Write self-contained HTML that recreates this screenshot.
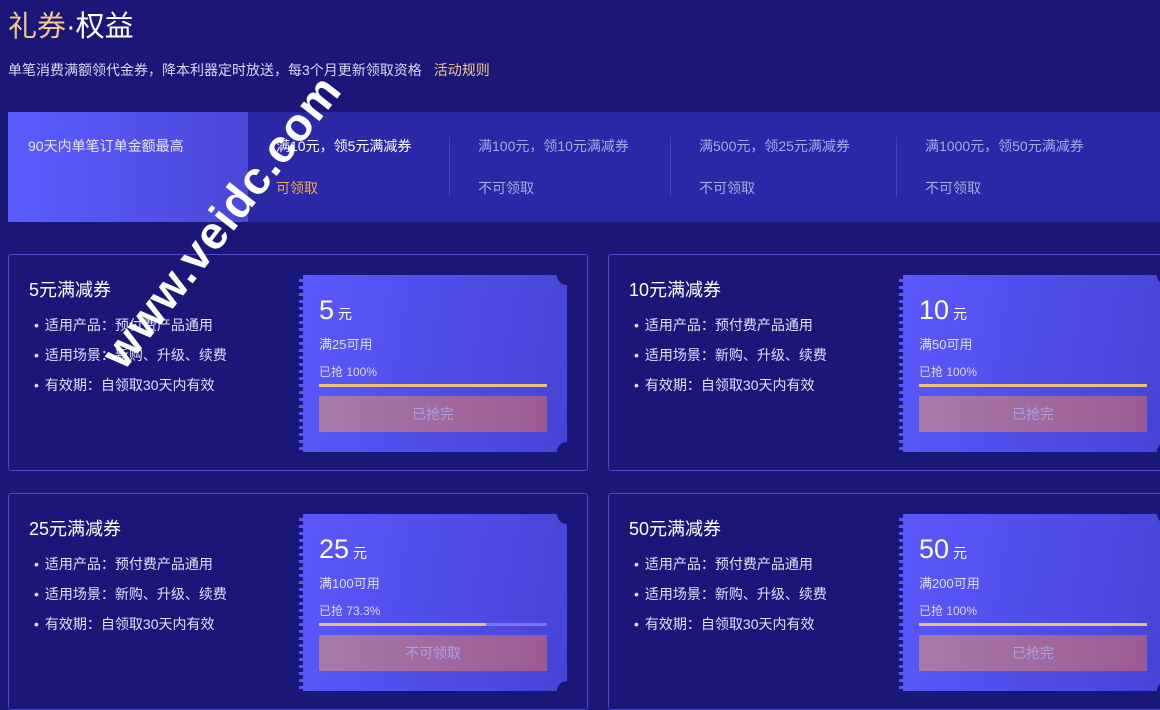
<!DOCTYPE html>
<html><head><meta charset="utf-8"><style>
*{margin:0;padding:0;box-sizing:border-box}
body{width:1160px;height:706px;overflow:hidden;background:#1a1778;font-family:"Liberation Sans","Noto Sans CJK SC",sans-serif;color:#fff;position:relative}
.t{position:absolute;left:8px;top:9px;font-size:29px;line-height:36px}
.t span{color:#f5c88a}
.sub{position:absolute;left:8px;top:60px;font-size:14px;color:#d8d8f5}
.sub b{font-weight:normal;color:#f5c88a;margin-left:12px}
.band{position:absolute;left:8px;top:112px;width:1152px;height:110px;background:#2a28a6}
.band .l{position:absolute;left:0;top:0;width:240px;height:110px;background:linear-gradient(90deg,#5a5cff,#4a48d8);font-size:14px;padding:24px 0 0 20px;color:#e8e8ff}
.step{position:absolute;top:24px;font-size:14px;color:#a9a9e0}
.step .s{margin-top:22px}
.sep{position:absolute;top:25px;width:1px;height:60px;background:#4543b8}
.card{position:absolute;width:580px;height:217px;border:1px solid #4a49c8;border-radius:3px}
.card h3{position:absolute;left:20px;top:21px;font-size:18px;font-weight:normal}
.card ul{position:absolute;left:25px;top:55px;list-style:none;font-size:14px;line-height:30px;color:#e0e0f8}
.card li:before{content:"•";margin-right:6px}
.tk{position:absolute;left:290px;top:20px;width:268px;height:177px;background:linear-gradient(100deg,#5a58fb,#4644d6);overflow:hidden}
.tk:before{content:"";position:absolute;left:0;top:0;width:4px;height:100%;background:repeating-linear-gradient(180deg,#1a1778 0 4px,transparent 4px 7px)}
.c1,.c2{position:absolute;right:-10px;width:20px;height:20px;border-radius:50%;background:#1a1778}
.c1{top:-10px}.c2{bottom:-10px}
.amt{position:absolute;left:20px;top:20px;font-size:27px}
.amt small{font-size:14px;margin-left:4px}
.cond{position:absolute;left:20px;top:59px;font-size:13px;color:#e0e0ff}
.pct{position:absolute;left:20px;top:88px;font-size:12px;color:#dcdcff}
.bar{position:absolute;left:20px;top:109px;width:228px;height:3px;background:#7a78e8}
.bar i{display:block;height:3px;background:#eec07a}
.btn{position:absolute;left:20px;top:121px;width:228px;height:36px;background:linear-gradient(90deg,#a87aa8,#9c5a94);text-align:center;line-height:36px;font-size:14px;color:#a9a0e6}
.wm{position:absolute;font-size:46px;font-weight:bold;color:#fff;transform:rotate(-52deg);transform-origin:left top;white-space:nowrap;letter-spacing:1px}
</style></head><body>
<div class="t"><span>礼券</span>·权益</div>
<div class="sub">单笔消费满额领代金券，降本利器定时放送，每3个月更新领取资格<b>活动规则</b></div>
<div class="band">
<div class="l">90天内单笔订单金额最高</div>
<div class="step" style="left:268px;color:#fff">满10元，领5元满减券<div class="s" style="color:#f5a94a">可领取</div></div>
<div class="sep" style="left:441px"></div>
<div class="step" style="left:470px">满100元，领10元满减券<div class="s">不可领取</div></div>
<div class="sep" style="left:662px"></div>
<div class="step" style="left:691px">满500元，领25元满减券<div class="s">不可领取</div></div>
<div class="sep" style="left:888px"></div>
<div class="step" style="left:917px">满1000元，领50元满减券<div class="s">不可领取</div></div>
</div>

<div class="card" style="left:8px;top:254px"><h3>5元满减券</h3><ul><li>适用产品：预付费产品通用</li><li>适用场景：新购、升级、续费</li><li>有效期：自领取30天内有效</li></ul>
<div class="tk"><div class="c1"></div><div class="c2"></div><div class="amt">5<small>元</small></div><div class="cond">满25可用</div><div class="pct">已抢 100%</div><div class="bar"><i style="width:100%"></i></div><div class="btn">已抢完</div></div></div>

<div class="card" style="left:608px;top:254px"><h3>10元满减券</h3><ul><li>适用产品：预付费产品通用</li><li>适用场景：新购、升级、续费</li><li>有效期：自领取30天内有效</li></ul>
<div class="tk"><div class="c1"></div><div class="c2"></div><div class="amt">10<small>元</small></div><div class="cond">满50可用</div><div class="pct">已抢 100%</div><div class="bar"><i style="width:100%"></i></div><div class="btn">已抢完</div></div></div>

<div class="card" style="left:8px;top:493px"><h3>25元满减券</h3><ul><li>适用产品：预付费产品通用</li><li>适用场景：新购、升级、续费</li><li>有效期：自领取30天内有效</li></ul>
<div class="tk"><div class="c1"></div><div class="c2"></div><div class="amt">25<small>元</small></div><div class="cond">满100可用</div><div class="pct">已抢 73.3%</div><div class="bar"><i style="width:73.3%"></i></div><div class="btn">不可领取</div></div></div>

<div class="card" style="left:608px;top:493px"><h3>50元满减券</h3><ul><li>适用产品：预付费产品通用</li><li>适用场景：新购、升级、续费</li><li>有效期：自领取30天内有效</li></ul>
<div class="tk"><div class="c1"></div><div class="c2"></div><div class="amt">50<small>元</small></div><div class="cond">满200可用</div><div class="pct">已抢 100%</div><div class="bar"><i style="width:100%"></i></div><div class="btn">已抢完</div></div></div>

<div class="wm" style="left:90px;top:345px">www.veidc.com</div>
</body></html>
